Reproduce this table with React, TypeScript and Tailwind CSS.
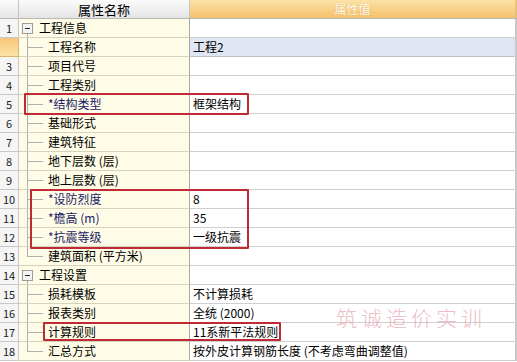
type Row = {
  no: number;
  name: string;
  value?: string;
  kind: "group" | "child" | "last";
  star?: boolean;
  selected?: boolean;
};

const rows: Row[] = [
  { no: 1, name: "工程信息", kind: "group" },
  { no: 2, name: "工程名称", value: "工程2", kind: "child", selected: true },
  { no: 3, name: "项目代号", kind: "child" },
  { no: 4, name: "工程类别", kind: "child" },
  { no: 5, name: "*结构类型", value: "框架结构", kind: "child", star: true },
  { no: 6, name: "基础形式", kind: "child" },
  { no: 7, name: "建筑特征", kind: "child" },
  { no: 8, name: "地下层数 (层)", kind: "child" },
  { no: 9, name: "地上层数 (层)", kind: "child" },
  { no: 10, name: "*设防烈度", value: "8", kind: "child", star: true },
  { no: 11, name: "*檐高 (m)", value: "35", kind: "child", star: true },
  { no: 12, name: "*抗震等级", value: "一级抗震", kind: "child", star: true },
  { no: 13, name: "建筑面积 (平方米)", kind: "last" },
  { no: 14, name: "工程设置", kind: "group" },
  { no: 15, name: "损耗模板", value: "不计算损耗", kind: "child" },
  { no: 16, name: "报表类别", value: "全统 (2000)", kind: "child" },
  { no: 17, name: "计算规则", value: "11系新平法规则", kind: "child" },
  { no: 18, name: "汇总方式", value: "按外皮计算钢筋长度 (不考虑弯曲调整值)", kind: "last" },
];

function TreeMark({ kind }: { kind: Row["kind"] }) {
  if (kind === "group") {
    return (
      <div className="relative w-[20px] h-full shrink-0">
        <div className="absolute left-[3px] top-[4px] w-[11px] h-[11px] border border-[#9c9c9c] bg-[#f4f4f4] flex items-center justify-center">
          <div className="w-[5px] h-px bg-[#222]" />
        </div>
        <div className="absolute left-[8px] top-[15px] bottom-0 w-px bg-[#b0b0b0]" />
      </div>
    );
  }
  return (
    <div className="relative w-[29px] h-full shrink-0">
      <div
        className={
          kind === "last"
            ? "absolute left-[8px] top-0 h-[9px] w-px bg-[#b0b0b0]"
            : "absolute left-[8px] top-0 bottom-0 w-px bg-[#b0b0b0]"
        }
      />
      <div className="absolute left-[8px] top-[9px] w-[16px] h-px bg-[#b0b0b0]" />
    </div>
  );
}

export default function App() {
  return (
    <div
      className="relative w-[517px] h-[362px] overflow-hidden bg-white text-[12px] text-black"
      style={{ fontFamily: '"Noto Sans CJK SC", "Liberation Sans", sans-serif' }}
    >
      {/* header */}
      <div className="flex h-[19px] border-b border-[#b8b8b8]">
        <div className="w-[19px] shrink-0 border-r border-[#c4c4c4] bg-gradient-to-b from-[#fbfbfb] to-[#e6e6e6]" />
        <div className="w-[171px] shrink-0 border-r border-[#c4c4c4] bg-gradient-to-b from-[#fbfbfb] to-[#e4e4e4] flex items-center justify-center leading-none text-[13px]">
          属性名称
        </div>
        <div className="flex-1 bg-gradient-to-b from-[#fde2a6] to-[#f3c06a] flex items-center justify-center leading-none text-[#fffaf0] [text-shadow:0_0_1px_#d9a24e]">
          属性值
        </div>
        <div className="w-[2px] bg-[#e8c27a]" />
      </div>

      {rows.map((r) => (
        <div key={r.no} className="flex h-[19px]">
          <div
            className={
              r.selected
                ? "w-[19px] shrink-0 border-r border-b border-[#d9b46a] bg-gradient-to-b from-[#f9c67a] to-[#fde3a8]"
                : "w-[19px] shrink-0 border-r border-b border-[#c8c8c8] bg-[#f5f5f5] flex items-center justify-center leading-none text-[11px] text-[#222]"
            }
          >
            {r.selected ? "" : r.no}
          </div>
          <div className="w-[171px] shrink-0 border-r border-b border-r-[#a8a8a8] border-b-[#d6d3bd] bg-[#fefce6] flex items-center">
            <TreeMark kind={r.kind} />
            <span className={r.star ? "leading-none text-[#1a1a66] whitespace-pre" : "leading-none whitespace-pre"}>{r.name}</span>
          </div>
          <div
            className={
              r.selected
                ? "flex-1 border-b border-[#bfc3cc] bg-[#dfe5f2] flex items-center pl-[3px] leading-none whitespace-pre"
                : "flex-1 border-b border-[#cfcfcf] bg-white flex items-center pl-[3px] leading-none whitespace-pre"
            }
          >
            {r.value}
          </div>
          <div className="w-[2px] bg-[#c8c8c8]" />
        </div>
      ))}

      {/* highlight boxes */}
      <div className="absolute left-[24px] top-[93px] w-[225px] h-[22px] border-2 border-[#bf2b34] rounded-[1px]" />
      <div className="absolute left-[30px] top-[189px] w-[219px] h-[60px] border-2 border-[#bf2b34] rounded-[1px]" />
      <div className="absolute left-[43px] top-[322px] w-[238px] h-[19px] border-2 border-[#bf2b34] rounded-[1px]" />

      {/* watermark */}
      <div className="absolute left-[336px] top-[307px] text-[21px] font-extralight tracking-[4px] text-[#e6a3b0] opacity-70 leading-none whitespace-nowrap">
        筑诚造价实训
      </div>
    </div>
  );
}
